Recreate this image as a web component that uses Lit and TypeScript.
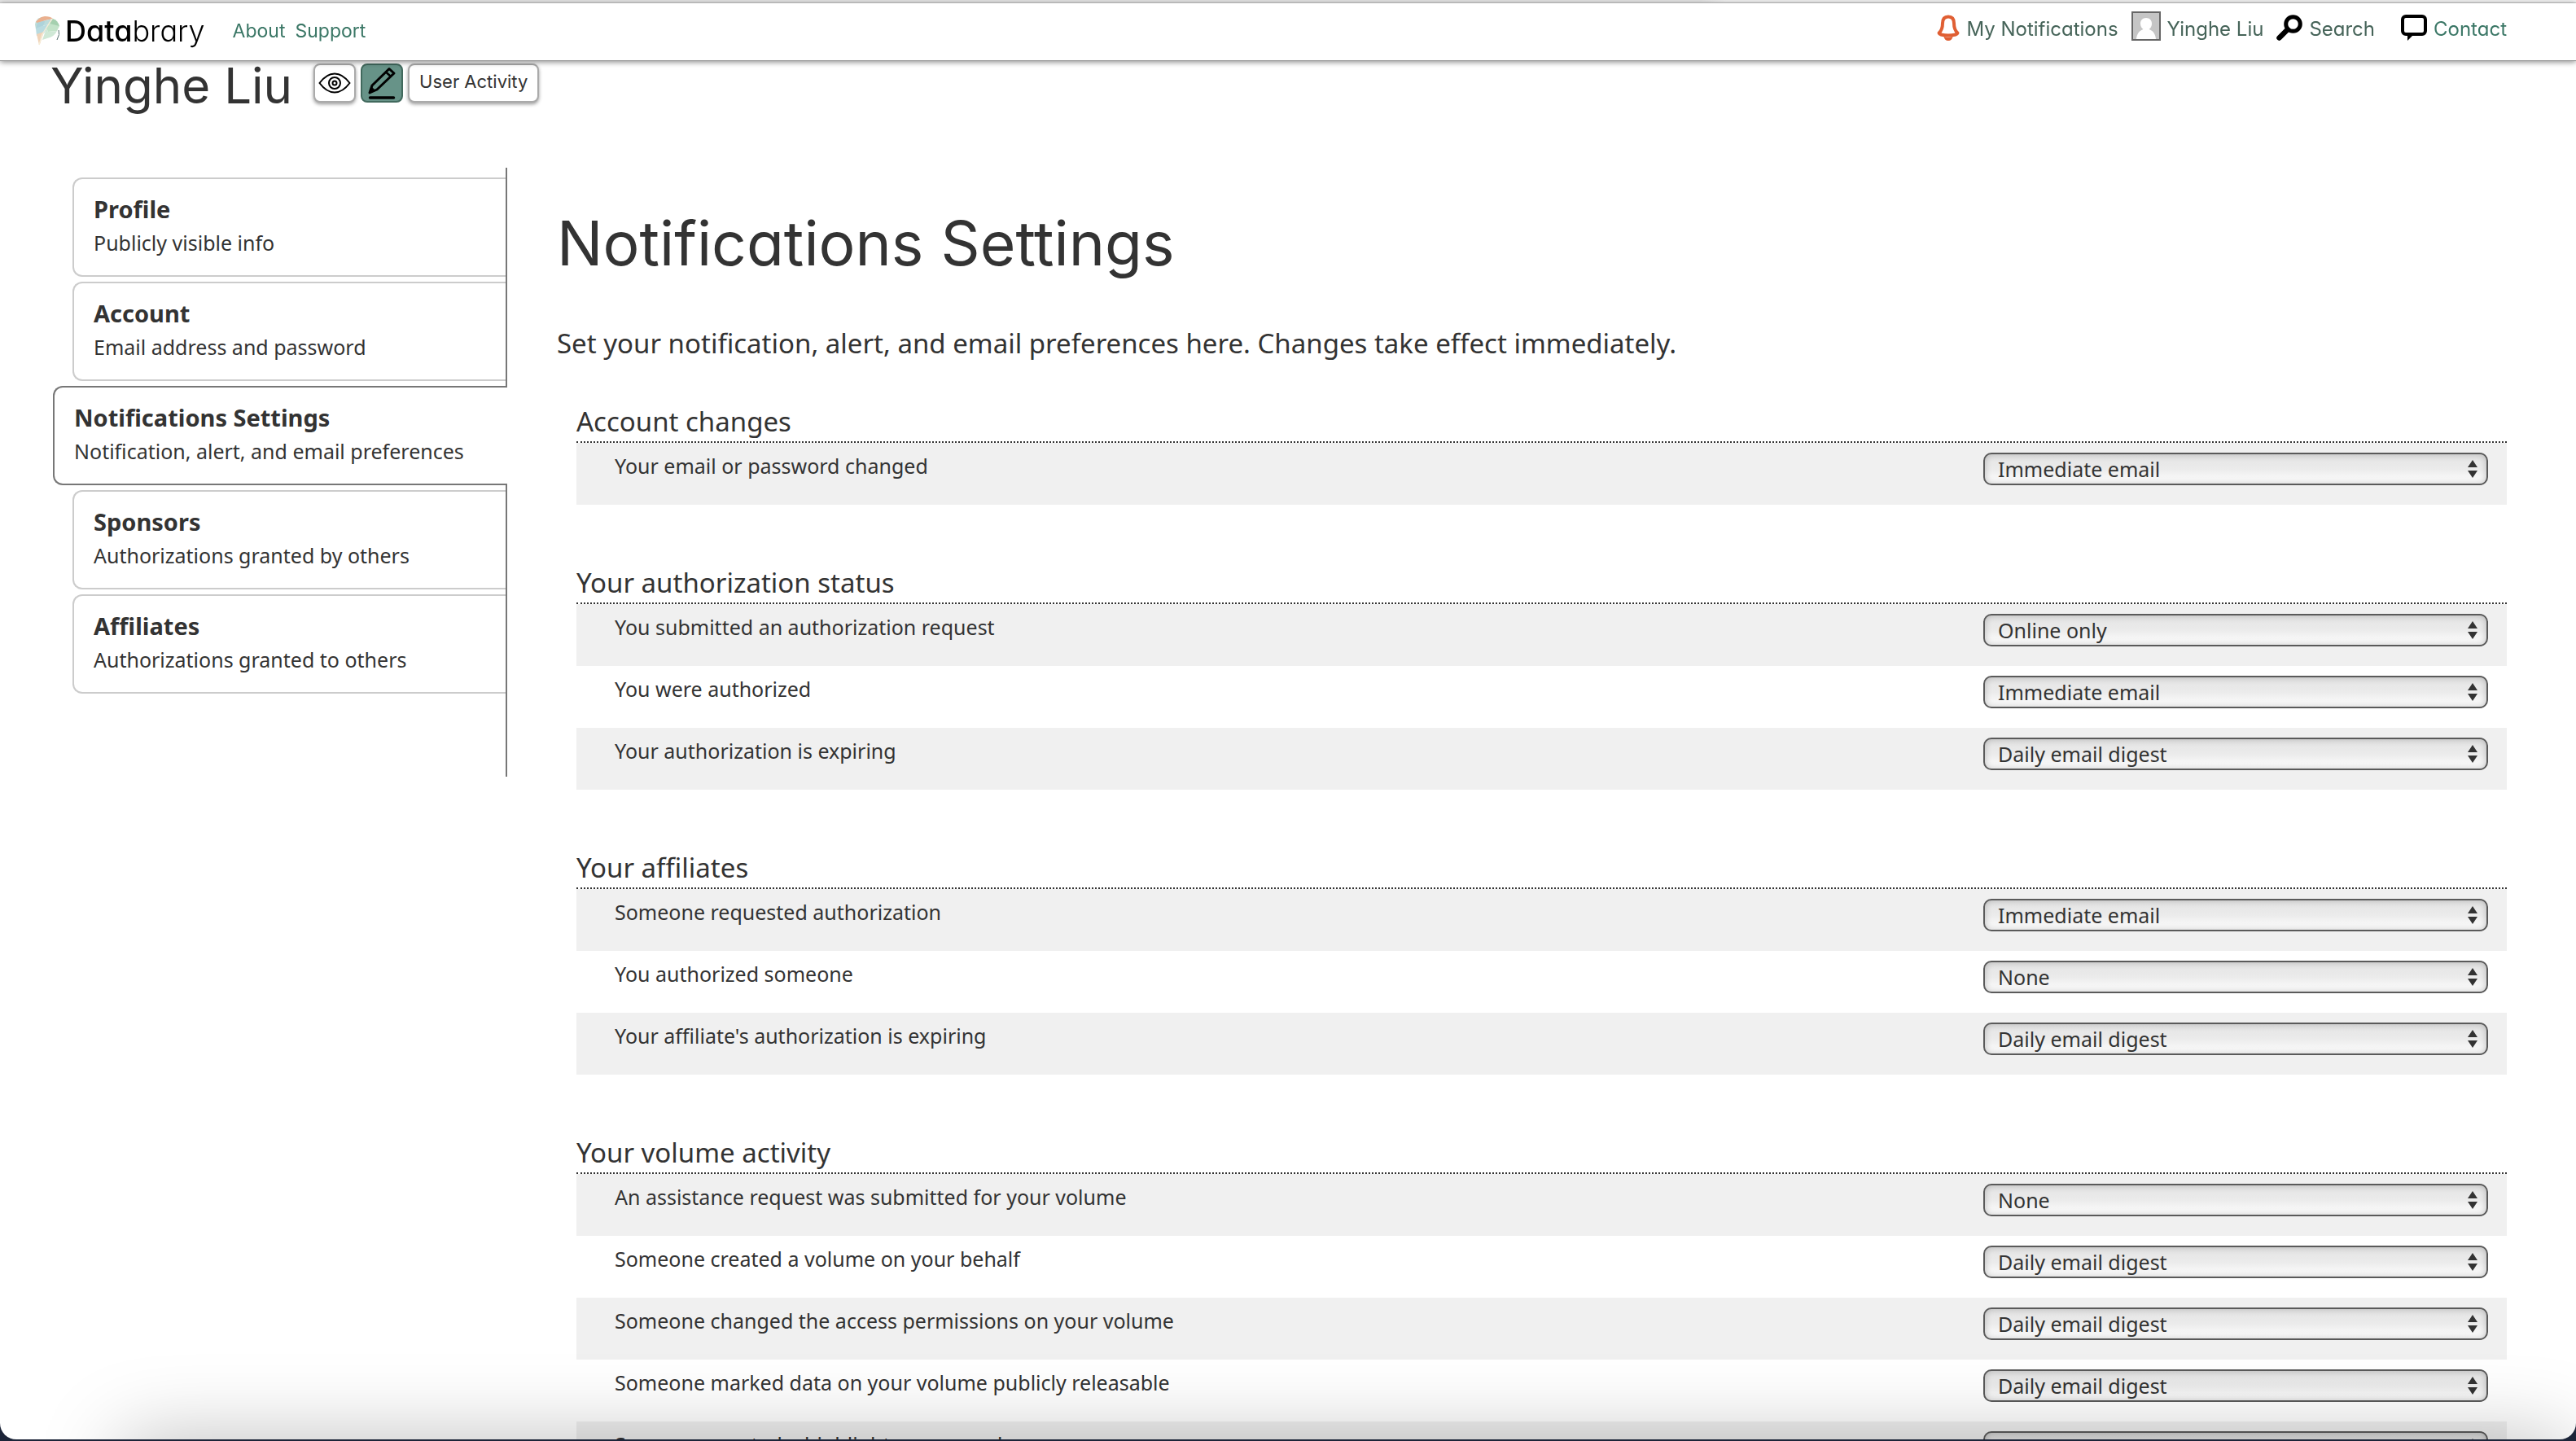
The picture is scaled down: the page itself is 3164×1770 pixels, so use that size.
import { LitElement, html, svg, css } from "lit";
import { customElement, property } from "lit/decorators.js";
import { classMap } from "lit/directives/class-map.js";

interface Tab {
  title: string;
  note: string;
  active?: boolean;
}

interface Section {
  title: string;
  rows: [label: string, value: string][];
}

const TABS: Tab[] = [
  { title: "Profile", note: "Publicly visible info" },
  { title: "Account", note: "Email address and password" },
  {
    title: "Notifications Settings",
    note: "Notification, alert, and email preferences",
    active: true,
  },
  { title: "Sponsors", note: "Authorizations granted by others" },
  { title: "Affiliates", note: "Authorizations granted to others" },
];

const DELIVERY = ["None", "Online only", "Immediate email", "Daily email digest"];

const SECTIONS: Section[] = [
  {
    title: "Account changes",
    rows: [["Your email or password changed", "Immediate email"]],
  },
  {
    title: "Your authorization status",
    rows: [
      ["You submitted an authorization request", "Online only"],
      ["You were authorized", "Immediate email"],
      ["Your authorization is expiring", "Daily email digest"],
    ],
  },
  {
    title: "Your affiliates",
    rows: [
      ["Someone requested authorization", "Immediate email"],
      ["You authorized someone", "None"],
      ["Your affiliate's authorization is expiring", "Daily email digest"],
    ],
  },
  {
    title: "Your volume activity",
    rows: [
      ["An assistance request was submitted for your volume", "None"],
      ["Someone created a volume on your behalf", "Daily email digest"],
      ["Someone changed the access permissions on your volume", "Daily email digest"],
      ["Someone marked data on your volume publicly releasable", "Daily email digest"],
      ["Someone created a highlight on your volume", "Daily email digest"],
    ],
  },
];

const leaf = svg`<svg class="leaf" viewBox="0 0 32 36" aria-hidden="true">
  <path d="M1 10 Q2 3 9 1 L13 8 L2 16Z" fill="#bfdcd6"/>
  <path d="M2 7 Q6 1 13 0 Q20 0 23 3 L14 5 L4 8Z" fill="#eab08f"/>
  <path d="M14 5 L23 3 L19 10 L9 12Z" fill="#bcdcdb"/>
  <path d="M4 8 L14 5 L9 16 L2 15Z" fill="#aed3da"/>
  <path d="M9 12 L19 10 L12 21 L3 24 L2 15Z" fill="#b9dbe0"/>
  <path d="M3 22 L12 19 L7 34 L6 35Z" fill="#f0d3b8"/>
  <path d="M23 3 Q29 5 31 12 L22 14 L19 9Z" fill="#a5d0af"/>
  <path d="M19 9 L31 12 L28 18 L17 19 L15 15Z" fill="#c3e3c9"/>
  <path d="M15 15 L17 19 L28 18 Q25 25 16 27 L10 29Z" fill="#cfe8d6"/>
  <path d="M6 35 L10 22 L15 14 L22 3" fill="none" stroke="#f6ecd6" stroke-width="1.4"/>
  <path d="M30 17 Q32 22 28 29" fill="none" stroke="#54706f" stroke-width="1"/>
</svg>`;

const bell = svg`<svg class="bell" viewBox="0 0 28 32" aria-hidden="true">
  <path d="M14 2.500 C8.500 2.500 7 6 7 10.500 C7 17 5.500 20 2.500 22.500 C3 24.500 8 25.500 14 25.500 S25 24.500 25.500 22.500 C22.500 20 21 17 21 10.500 C21 6 19.500 2.500 14 2.500Z" fill="#fff" stroke="#e05f33" stroke-width="4" stroke-linejoin="round"/>
  <path d="M8.500 27 Q14 28.500 19.500 27 Q18.500 32 14 32 T8.500 27Z" fill="#e05f33"/>
</svg>`;

const avatar = svg`<svg class="avatar" viewBox="0 0 36 36" aria-hidden="true">
  <rect x="1" y="1" width="34" height="34" fill="#c5c5c5" stroke="#666" stroke-width="2"/>
  <path d="M18 8 C22.500 8 25 11 25 15 C25 18.500 23.500 20.500 21.500 22 C26.500 23.500 29.500 28 30 34 H6 C6.500 28 9.500 23.500 14.500 22 C12.500 20.500 11 18.500 11 15 C11 11 13.500 8 18 8Z" fill="#fff"/>
</svg>`;

const magnifier = svg`<svg class="icon" viewBox="0 0 32 32" aria-hidden="true">
  <circle cx="20.500" cy="11.500" r="8.800" fill="none" stroke="#000" stroke-width="5"/>
  <path d="M13.500 18.500 L3.500 28.500" stroke="#000" stroke-width="6.500" stroke-linecap="round"/>
</svg>`;

const bubble = svg`<svg class="icon" viewBox="0 0 32 32" aria-hidden="true">
  <rect x="2" y="2" width="28" height="22" rx="4" fill="none" stroke="#000" stroke-width="4"/>
  <path d="M8 25 V32 L15 25Z" fill="#000"/>
</svg>`;

const eye = svg`<svg class="tool" viewBox="0 0 40 40" aria-hidden="true">
  <g fill="none" stroke="#000" stroke-width="2">
    <path d="M1.500 20 Q10 8.500 20 8.500 T38.500 20 Q30 31.500 20 31.500 T1.500 20Z"/>
    <circle cx="20" cy="20" r="7"/>
    <circle cx="20" cy="20" r="2.500"/>
  </g>
</svg>`;

const pencil = svg`<svg class="tool" viewBox="0 0 40 40" aria-hidden="true">
  <g fill="none" stroke="#000" stroke-linejoin="round">
    <path d="M5 32 L8 23 L29 2.500 L35 8 L14 28Z" stroke-width="3"/>
    <path d="M25 6.500 L31 12" stroke-width="2.500"/>
    <path d="M5 32 L7.500 25 L11.500 29Z" fill="#000" stroke-width="1"/>
    <path d="M5.500 38 H34.500" stroke-width="3.500" stroke-linecap="round"/>
  </g>
</svg>`;

const arrows = svg`<svg class="arrows" viewBox="0 0 12 24" aria-hidden="true">
  <path d="M6 1 L12 10 H0Z M6 23 L12 14 H0Z" fill="#333"/>
</svg>`;

@customElement("site-header")
export class SiteHeader extends LitElement {
  static styles = css`
    :host {
      display: block;
      position: sticky;
      top: 0;
      z-index: 1;
      font: 23px/28px Inter, "Liberation Sans", sans-serif;
      font-feature-settings: "cv11";
    }
    .strip {
      height: 3px;
      background: linear-gradient(90deg, #e6e6e6 66%, #f4f4f4 67%);
      border-bottom: 1px solid #d2d2d2;
    }
    .bar {
      display: flex;
      justify-content: space-between;
      box-sizing: border-box;
      min-height: 71px;
      padding: 0 85px 0 42px;
      background: #fff;
      border-bottom: 1px solid #949494;
      box-shadow: 0 1px 7px rgba(0, 0, 0, 0.5);
    }
    a {
      color: #3b7766;
      text-decoration: none;
    }
    .left {
      display: flex;
      align-items: center;
      padding-bottom: 3px;
    }
    .brand {
      display: flex;
      align-items: center;
      gap: 6px;
      margin-right: 34px;
      color: #000;
      font-size: 36px;
      line-height: 44px;
      font-weight: 300;
    }
    .brand b {
      font-weight: 500;
    }
    .links {
      display: flex;
      gap: 12px;
    }
    .right {
      display: flex;
      align-items: flex-end;
      align-self: flex-start;
      gap: 16px;
      padding-top: 10px;
      font-size: 24px;
    }
    .right a {
      display: flex;
      align-items: flex-end;
      gap: 8px;
      color: #466459;
    }
    .right .contact {
      margin-left: 16px;
      color: #3b7766;
    }
    .leaf {
      width: 32px;
      height: 36px;
    }
    .bell {
      width: 28px;
      height: 32px;
    }
    .icon {
      width: 32px;
      height: 32px;
    }
    .avatar {
      width: 36px;
      height: 36px;
    }
  `;

  render() {
    return html`
      <div class="strip"></div>
      <header class="bar">
        <div class="left">
          <a class="brand" href="#home">${leaf}<span><b>Data</b>brary</span></a>
          <nav class="links"><a href="#about">About</a><a href="#support">Support</a></nav>
        </div>
        <nav class="right">
          <a href="#notifications">${bell}<span>My Notifications</span></a>
          <a href="#me">${avatar}<span>Yinghe Liu</span></a>
          <a href="#search">${magnifier}<span>Search</span></a>
          <a class="contact" href="#contact">${bubble}<span>Contact</span></a>
        </nav>
      </header>
    `;
  }
}

@customElement("settings-tabs")
export class SettingsTabs extends LitElement {
  @property({ attribute: false }) tabs: Tab[] = [];

  static styles = css`
    :host {
      display: block;
    }
    .tabs {
      display: flex;
      flex-direction: column;
      gap: 6px;
      padding: 12px 0 102px 24px;
      border-right: 2px solid #777;
    }
    .tab {
      padding: 18px 24px 24px;
      border: 2px solid #ccc;
      border-right: 0;
      border-radius: 12px 0 0 12px;
      background: #fff;
      color: #333;
      text-decoration: none;
    }
    .active {
      margin: 0 -2px 0 -24px;
      border-color: #777;
    }
    .title {
      display: block;
      margin-bottom: 6px;
      font-size: 29px;
      font-weight: 700;
      line-height: 38px;
    }
    .note {
      display: block;
      font-size: 25px;
      line-height: 32px;
    }
  `;

  render() {
    return html`<nav class="tabs" aria-label="Settings">
      ${this.tabs.map(
        (t) => html`<a class=${classMap({ tab: true, active: !!t.active })} href="#tab">
          <span class="title">${t.title}</span>
          <span class="note">${t.note}</span>
        </a>`,
      )}
    </nav>`;
  }
}

@customElement("settings-section")
export class SettingsSection extends LitElement {
  @property({ attribute: false }) section!: Section;

  static styles = css`
    :host {
      display: block;
    }
    h2 {
      margin: 0;
      border-bottom: 2px dotted #333;
      font-size: 33px;
      font-weight: 400;
      line-height: 48px;
    }
    .row {
      display: grid;
      grid-template-columns: minmax(0, 1fr) minmax(0, 620px);
      align-items: start;
      padding: 12px 23px 24px 47px;
    }
    .row:nth-child(even) {
      background: #f0f0f0;
    }
    label {
      font-size: 25px;
      line-height: 32px;
    }
    .field {
      display: grid;
      align-items: center;
    }
    select,
    .arrows {
      grid-area: 1 / 1;
    }
    select {
      appearance: none;
      width: 100%;
      height: 40px;
      padding: 0 40px 0 16px;
      border: 2px solid #5a5a5a;
      border-radius: 10px;
      background: linear-gradient(#e4e4e4, #ebebeb 50%, #fff);
      box-shadow: inset 0 0 8px rgba(0, 0, 0, 0.22);
      color: #333;
      font: 25px/32px "Noto Sans", "Open Sans", sans-serif;
    }
    .arrows {
      justify-self: end;
      width: 12px;
      height: 24px;
      margin-right: 13px;
      pointer-events: none;
    }
  `;

  render() {
    return html`
      <h2>${this.section.title}</h2>
      ${this.section.rows.map(
        ([label, value], i) => html`<div class="row">
          <label for="choice-${i}">${label}</label>
          <div class="field">
            <select id="choice-${i}">
              ${DELIVERY.map((d) => html`<option ?selected=${d === value}>${d}</option>`)}
            </select>
            ${arrows}
          </div>
        </div>`,
      )}
    `;
  }
}

@customElement("app-root")
export class AppRoot extends LitElement {
  static styles = css`
    :host {
      display: block;
      position: relative;
      box-sizing: border-box;
      height: 100vh;
      padding-bottom: 2px;
      overflow: hidden;
      background: #1c2438;
      color: #333;
      font-family: "Noto Sans", "Open Sans", sans-serif;
    }
    .window {
      position: relative;
      height: 100%;
      overflow: hidden;
      border-radius: 0 0 20px 20px;
      background: #fff;
    }
    .page {
      height: 100%;
      overflow-y: auto;
      scrollbar-width: none;
    }
    .heading {
      display: flex;
      align-items: flex-start;
      gap: 26px;
      padding-left: 62px;
    }
    h1,
    h2 {
      margin: 0;
      font-family: Inter, "Liberation Sans", sans-serif;
      font-feature-settings: "cv11";
      font-weight: 400;
    }
    h1 {
      font-size: 60px;
      line-height: 60px;
    }
    .actions {
      display: flex;
      gap: 6px;
      padding-top: 3px;
    }
    button {
      box-sizing: border-box;
      display: grid;
      place-items: center;
      height: 48px;
      min-width: 52px;
      padding: 0 4px;
      border: 2px solid #aaa;
      border-radius: 8px;
      background: #fff;
      box-shadow: 0 2px 4px rgba(0, 0, 0, 0.4);
      color: #333;
      font: 22px/28px Inter, "Liberation Sans", sans-serif;
      font-feature-settings: "cv11";
    }
    .on {
      border-color: #41695d;
      background: #679388;
      box-shadow: none;
    }
    .wide {
      padding: 0 12px 4px;
    }
    .tool {
      width: 40px;
      height: 40px;
    }
    .columns {
      display: grid;
      grid-template-columns: 558px minmax(0, 1fr);
      align-items: start;
      gap: 61px;
      padding: 71px 85px 72px 65px;
    }
    .content {
      padding-top: 48px;
    }
    h2 {
      font-size: 75px;
      line-height: 90px;
    }
    .intro {
      margin: 56px 0 50px;
      font-size: 33px;
      line-height: 44px;
    }
    .sections {
      display: flex;
      flex-direction: column;
      gap: 72px;
      padding-left: 24px;
    }
    .shade {
      position: absolute;
      top: 100%;
      left: 150px;
      right: 10px;
      height: 160px;
      box-shadow: 0 0 100px rgba(0, 0, 0, 0.26);
      pointer-events: none;
    }
  `;

  render() {
    return html`
      <div class="window">
        <div class="page">
          <site-header></site-header>
          <div class="heading">
            <h1>Yinghe Liu</h1>
            <div class="actions">
              <button type="button" aria-label="View profile">${eye}</button>
              <button type="button" class="on" aria-label="Edit profile">${pencil}</button>
              <button type="button" class="wide">User Activity</button>
            </div>
          </div>
          <div class="columns">
            <settings-tabs .tabs=${TABS}></settings-tabs>
            <main class="content">
              <h2>Notifications Settings</h2>
              <p class="intro">
                Set your notification, alert, and email preferences here. Changes take effect
                immediately.
              </p>
              <div class="sections">
                ${SECTIONS.map((s) => html`<settings-section .section=${s}></settings-section>`)}
              </div>
            </main>
          </div>
        </div>
        <div class="shade"></div>
      </div>
    `;
  }
}
